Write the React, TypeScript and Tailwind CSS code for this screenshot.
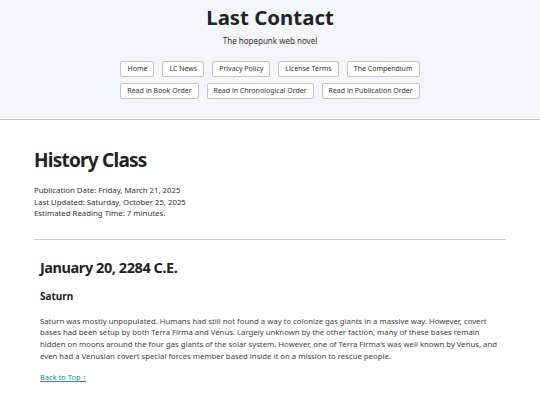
import React from 'react';

const navTop = ['Home', 'LC News', 'Privacy Policy', 'License Terms', 'The Compendium'];
const navBottom = ['Read in Book Order', 'Read in Chronological Order', 'Read in Publication Order'];

function NavButton({ label }: { label: string }) {
  return (
    <a
      href="#"
      className="inline-flex h-[16px] items-center rounded-[2px] border border-[#c4c6cc] bg-white px-[6px] text-[7px] text-[#333]"
    >
      {label}
    </a>
  );
}

export default function App() {
  return (
    <div className="min-h-screen bg-white font-['Noto_Sans',sans-serif] text-[#333]">
      <header className="h-[120px] border-b border-[#c6c6cc] bg-[#f4f6fe] pt-[4px] text-center">
        <h1 className="text-[20.4px] font-bold leading-[26px] text-[#222]">Last Contact</h1>
        <p className="mt-[6px] text-[8px] leading-[10px] text-[#333]">The hopepunk web novel</p>
        <nav className="mt-[15px] flex flex-col items-center gap-[6px]">
          <div className="flex gap-[8px]">
            {navTop.map((l) => (
              <NavButton key={l} label={l} />
            ))}
          </div>
          <div className="flex gap-[8px]">
            {navBottom.map((l) => (
              <NavButton key={l} label={l} />
            ))}
          </div>
        </nav>
      </header>

      <main className="px-[34px] pt-[28px]">
        <h2 className="text-[19px] font-bold leading-[24px] tracking-[-0.04em] text-[#222]">History Class</h2>
        <div className="mt-[13px] text-[7.8px] leading-[11.5px] text-[#333]">
          <p>Publication Date: Friday, March 21, 2025</p>
          <p>Last Updated: Saturday, October 25, 2025</p>
          <p>Estimated Reading Time: 7 minutes.</p>
        </div>
        <hr className="mt-[19px] border-t border-[#c8c8c8]" />

        <section className="px-[6px] pt-[17px]">
          <h3 className="text-[14.5px] font-bold leading-[20px] tracking-[-0.03em] text-[#222]">
            January 20, 2284 C.E.
          </h3>
          <h4 className="mt-[12px] text-[10px] font-bold leading-[14px] text-[#222]">Saturn</h4>
          <p className="mt-[13px] text-[7.75px] leading-[11.7px] text-[#444]">
            Saturn was mostly unpopulated. Humans had still not found a way to colonize gas giants in a massive way.
            However, covert bases had been setup by both Terra Firma and Venus. Largely unknown by the other faction,
            many of these bases remain hidden on moons around the four gas giants of the solar system. However, one of
            Terra Firma's was well known by Venus, and even had a Venusian covert special forces member based inside it
            on a mission to rescue people.
          </p>
          <a href="#" className="mt-[9px] inline-block text-[7.5px] leading-[10px] text-[#2c8c8c] underline">
            Back to Top ↑
          </a>
        </section>
      </main>
    </div>
  );
}
